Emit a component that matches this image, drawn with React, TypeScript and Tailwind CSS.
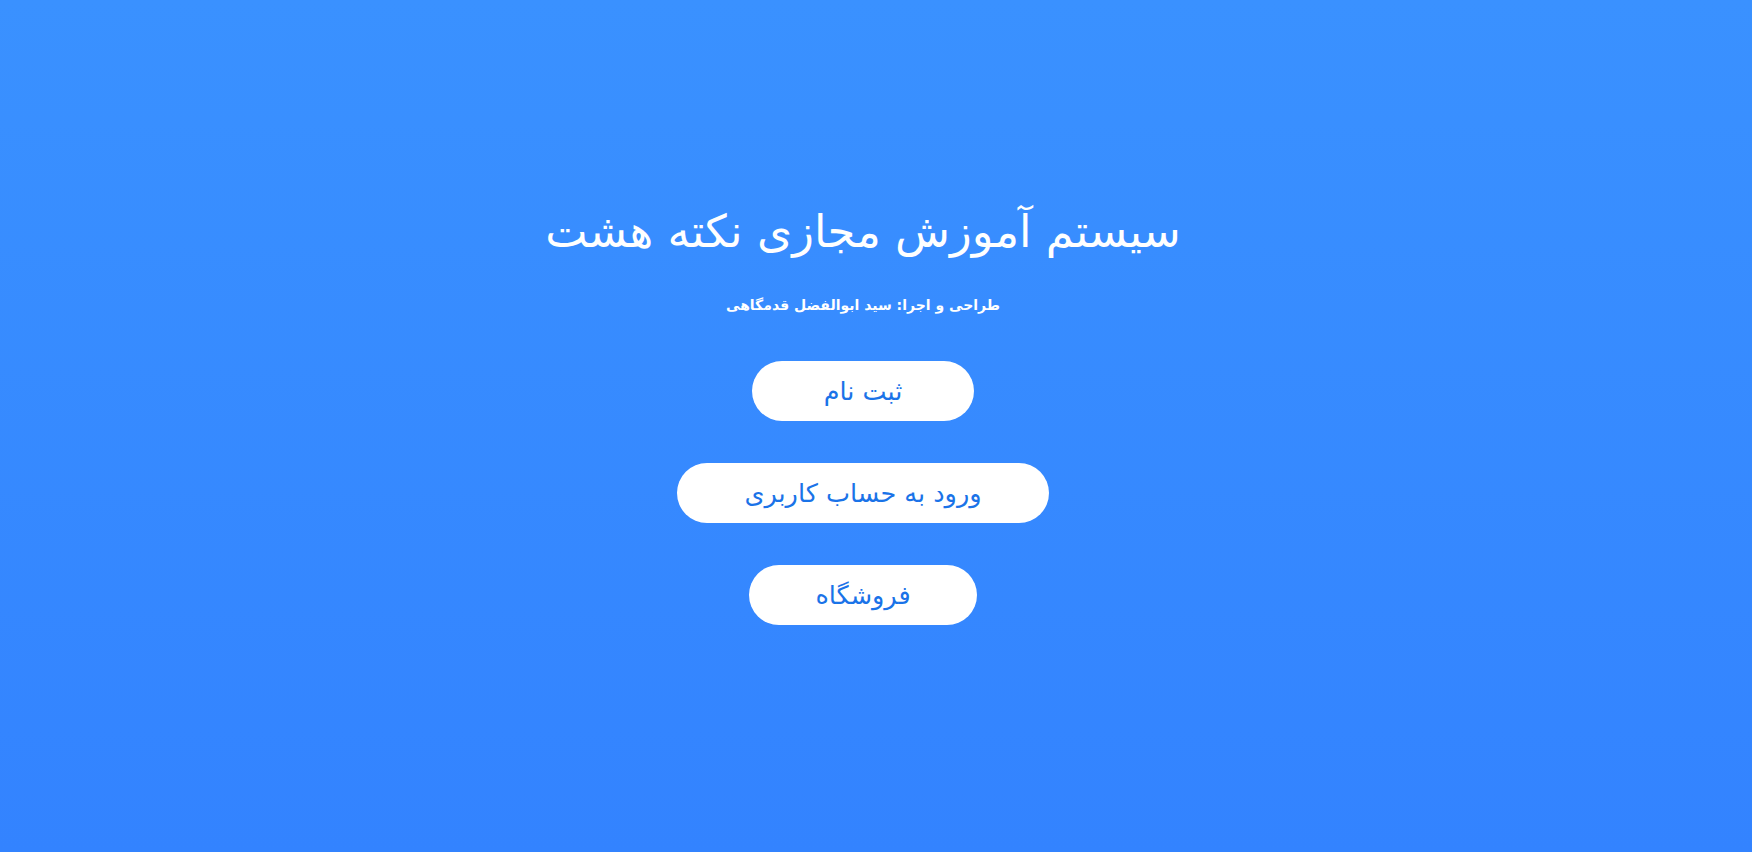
export default function App() {
  const font = { fontFamily: '"DejaVu Sans", sans-serif' };
  return (
    <div
      dir="rtl"
      style={font}
      className="h-[852px] w-full bg-gradient-to-b from-[#3a91ff] to-[#3383ff] flex flex-col items-center pt-[204px] pr-[26px]"
    >
      <h1 className="text-[45px] leading-[56px] text-white">سیستم آموزش مجازی نکته هشت</h1>
      <p className="mt-[34px] text-[14px] leading-[22px] font-bold text-white">طراحی و اجرا: سید ابوالفضل قدمگاهی</p>
      <div className="mt-[45px] flex flex-col items-center gap-[42px]">
        <button className="h-[60px] rounded-full bg-white px-[72px] text-[25.5px] text-[#1a73e8]">ثبت نام</button>
        <button className="h-[60px] rounded-full bg-white px-[67px] text-[25.5px] text-[#1a73e8]">ورود به حساب کاربری</button>
        <button className="h-[60px] rounded-full bg-white px-[66px] text-[25.5px] text-[#1a73e8]">فروشگاه</button>
      </div>
    </div>
  );
}
